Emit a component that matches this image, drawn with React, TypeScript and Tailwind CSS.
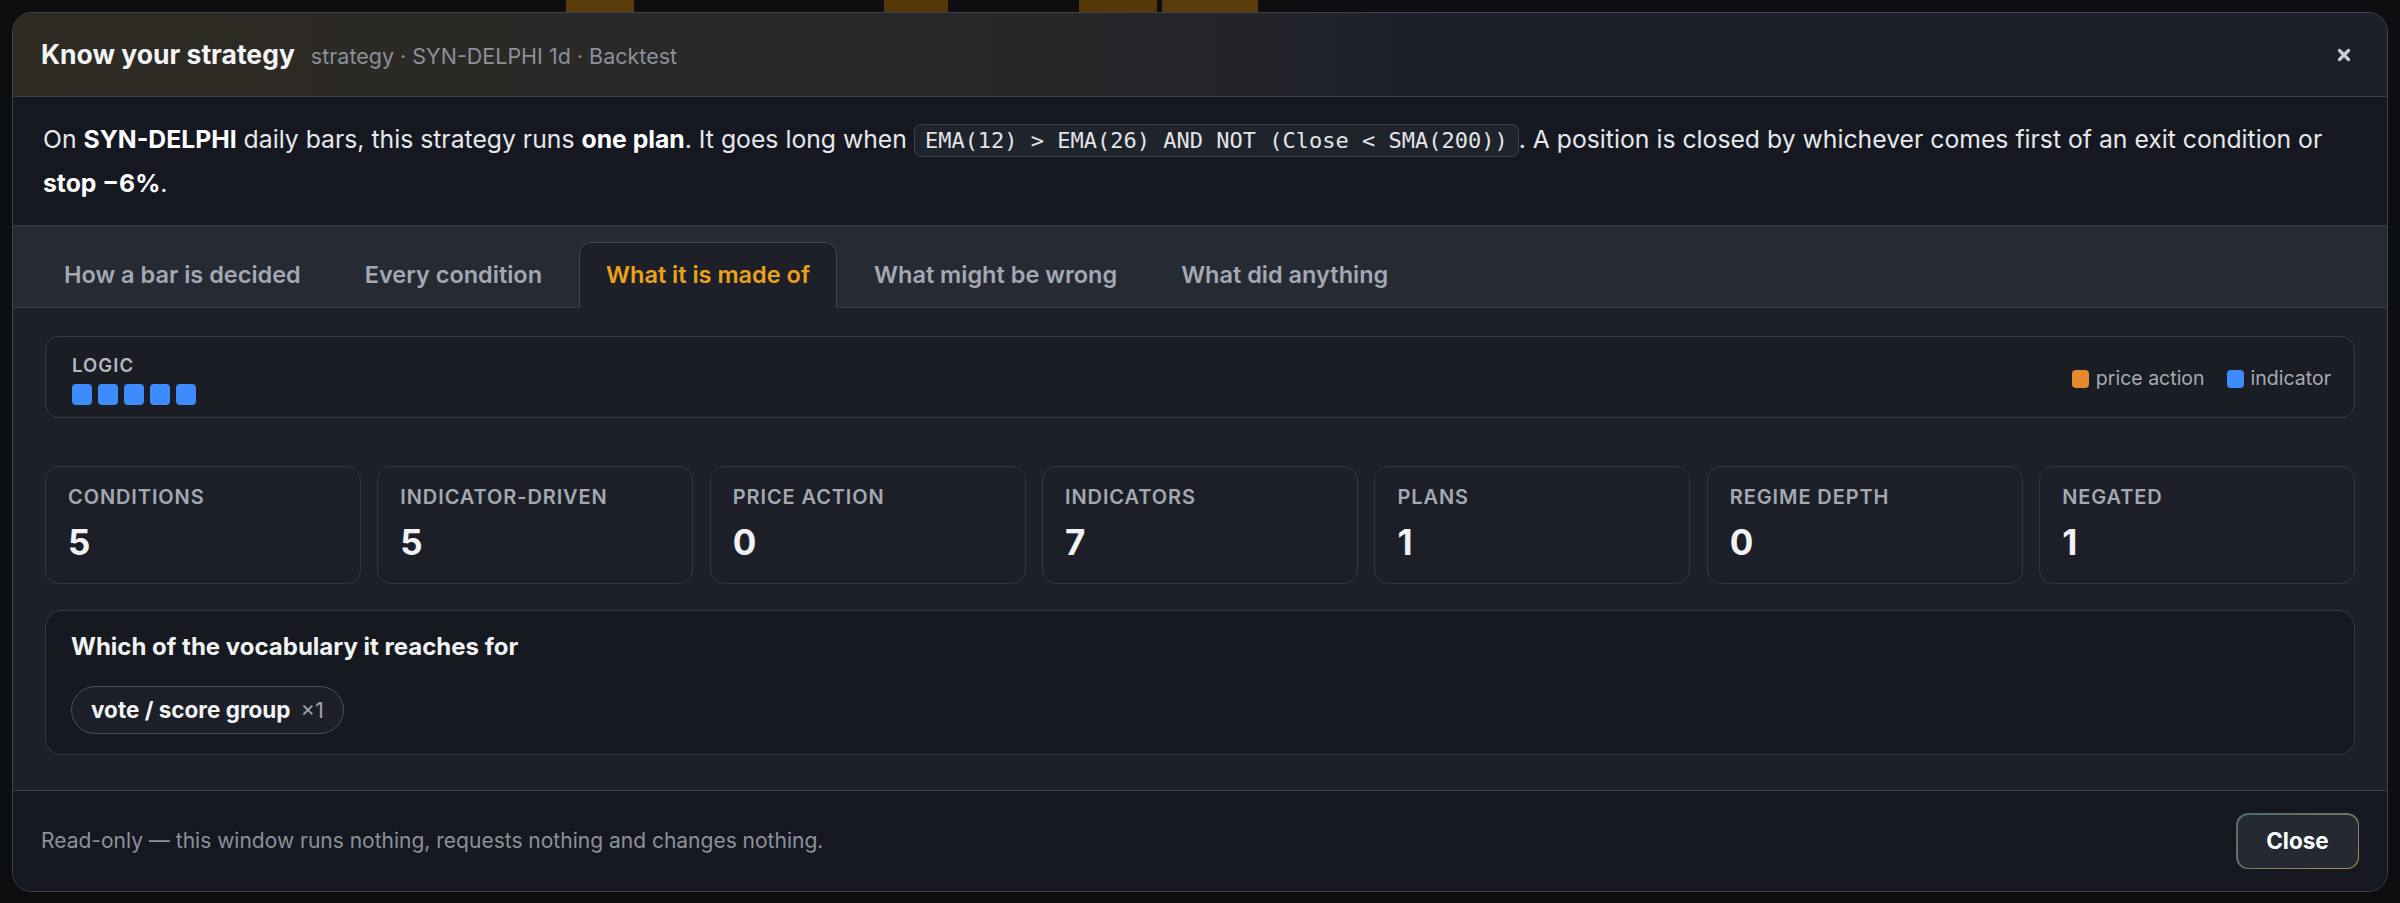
import React from "react";

type Stat = { label: string; value: number };

const stats: Stat[] = [
    { label: "Conditions", value: 5 },
    { label: "Indicator-driven", value: 5 },
    { label: "Price action", value: 0 },
    { label: "Indicators", value: 7 },
    { label: "Plans", value: 1 },
    { label: "Regime depth", value: 0 },
    { label: "Negated", value: 1 },
];

const tabs = ["How a bar is decided", "Every condition", "What it is made of", "What might be wrong", "What did anything"];

// chart candles peeking out behind the dimmed backdrop
function Backdrop() {
    return (
        <svg className="absolute left-0 top-0" width="2400" height="14" viewBox="0 0 2400 14">
            <rect x="566" y="0" width="68" height="14" fill="#5a3b0c" />
            <rect x="884" y="0" width="64" height="14" fill="#553809" />
            <rect x="1079" y="0" width="78" height="14" fill="#553809" />
            <rect x="1162" y="0" width="96" height="14" fill="#5a3b0c" />
        </svg>
    );
}

function CloseIcon() {
    return (
        <svg width="14" height="14" viewBox="0 0 14 14" aria-hidden>
            <path d="M2.5 2.5 L11.5 11.5 M11.5 2.5 L2.5 11.5" stroke="#c9cdd4" strokeWidth="3.2" strokeLinecap="round" />
        </svg>
    );
}

export default function App() {
    const active = 2;

    return (
        <div className="relative h-[903px] w-full overflow-hidden bg-[#0e0e10] font-[Inter,'Liberation_Sans',sans-serif]">
            <Backdrop />
            <div className="relative flex h-full px-[12px] pb-[11px] pt-[12px]">
                <div className="flex flex-1 flex-col overflow-hidden rounded-[20px] border border-[#3e434e] bg-[#1d2028]">
                    {/* header */}
                    <div className="flex h-[84px] shrink-0 items-center justify-between border-b border-[#3a3f4a] bg-linear-to-r from-[#2f2b23] via-[#27272a] via-45% to-[#1d2029] to-60% pl-[28px] pr-[36px]">
                        <div className="flex items-baseline gap-[16px]">
                            <span className="text-[26.5px] font-bold text-[#f3f4f6]">Know your strategy</span>
                            <span className="text-[21.5px] text-[#8b909b]">strategy · SYN-DELPHI 1d · Backtest</span>
                        </div>
                        <button className="flex items-center">
                            <CloseIcon />
                        </button>
                    </div>

                    {/* plain-language summary */}
                    <div className="shrink-0 border-b border-[#393e49] bg-[#151820] px-[30px] py-[21px] text-[24.75px] leading-[42px] text-[#e6e8ec]">
                        On <b className="font-bold text-white">SYN-DELPHI</b> daily bars, this strategy runs{" "}
                        <b className="font-bold text-white">one plan</b>. It goes long when{" "}
                        <code className="rounded-[7px] border border-[#3d424c] bg-[#1f232b] px-[10px] py-[3px] font-['DejaVu_Sans_Mono',monospace] text-[22px] text-[#e3e5e8]">
                            EMA(12) &gt; EMA(26) AND NOT (Close &lt; SMA(200))
                        </code>
                        . A position is closed by whichever comes first of an exit condition or{" "}
                        <b className="font-bold text-white">stop −6%</b>.
                    </div>

                    {/* tabs */}
                    <div className="flex shrink-0 items-end gap-[10px] border-b border-[#393e49] bg-[#262a32] px-[24px] pt-[16px]">
                        {tabs.map((t, i) => (
                            <div
                                key={t}
                                className={[
                                    "-mb-px flex h-[66px] items-center rounded-t-[12px] border px-[26px] text-[23.5px] font-semibold",
                                    i === active
                                        ? "border-[#40454f] border-b-[#1d2028] bg-[#1d2028] text-[#eba21b]"
                                        : "border-transparent text-[#a3a8b2]",
                                ].join(" ")}
                            >
                                {t}
                            </div>
                        ))}
                    </div>

                    {/* tab body */}
                    <div className="flex flex-1 flex-col px-[32px] pt-[28px]">
                        <div className="flex items-center justify-between rounded-[14px] border border-[#353a45] bg-[#1a1d24] pb-[12px] pl-[26px] pr-[23px] pt-[16px]">
                            <div>
                                <div className="text-[18.5px] font-semibold uppercase leading-[24px] tracking-[0.06em] text-[#b4b8c0]">
                                    Logic
                                </div>
                                <div className="mt-[7px] flex gap-[6px]">
                                    {[0, 1, 2, 3, 4].map((i) => (
                                        <span key={i} className="h-[21px] w-[20px] rounded-[4px] bg-[#3d8bfd]" />
                                    ))}
                                </div>
                            </div>
                            <div className="flex items-center gap-[22px] text-[19.5px] text-[#a6abb4]">
                                <span className="flex items-center gap-[7px]">
                                    <span className="h-[18px] w-[17px] rounded-[4px] bg-[#e58a2e]" />
                                    price action
                                </span>
                                <span className="flex items-center gap-[7px]">
                                    <span className="h-[18px] w-[17px] rounded-[4px] bg-[#3d8bfd]" />
                                    indicator
                                </span>
                            </div>
                        </div>

                        <div className="mt-[48px] grid grid-cols-7 gap-[16.5px]">
                            {stats.map((s) => (
                                <div
                                    key={s.label}
                                    className="rounded-[14px] border border-[#323743] bg-[#1c1f27] pb-[21px] pl-[22px] pt-[17px]"
                                >
                                    <div className="text-[20px] font-semibold uppercase leading-[27px] tracking-[0.045em] text-[#a3a8b1]">
                                        {s.label}
                                    </div>
                                    <div className="mt-[11px] text-[35px] font-bold leading-[40px] text-[#f1f2f4]">{s.value}</div>
                                </div>
                            ))}
                        </div>

                        <div className="mt-[26px] rounded-[16px] border border-[#353a44] bg-[#161920] pb-[20px] pl-[25px] pt-[22px]">
                            <div className="text-[24px] font-bold leading-[28px] text-[#f1f2f4]">
                                Which of the vocabulary it reaches for
                            </div>
                            <div className="mt-[25px] flex">
                                <span className="flex h-[48px] items-center gap-[10px] rounded-full border border-[#4a4f5a] bg-[#1c1f27] px-[19px]">
                                    <span className="text-[22.5px] font-bold text-[#f3f4f6]">vote / score group</span>
                                    <span className="text-[22px] text-[#9ca0a8]">×1</span>
                                </span>
                            </div>
                        </div>
                    </div>

                    {/* footer */}
                    <div className="flex h-[101px] shrink-0 items-center justify-between border-t border-[#393e49] bg-[#151820] px-[28px]">
                        <span className="text-[21px] text-[#8c919b]">
                            Read-only — this window runs nothing, requests nothing and changes nothing.
                        </span>
                        <div className="rounded-[12px] bg-linear-to-br from-[#4c6a66] via-[#6f7462] to-[#b49753] p-[1.5px]">
                            <button className="flex h-[53px] w-[120px] items-center justify-center rounded-[11px] bg-[#252932] text-[22.5px] font-bold text-white">
                                Close
                            </button>
                        </div>
                    </div>
                </div>
            </div>
        </div>
    );
}
